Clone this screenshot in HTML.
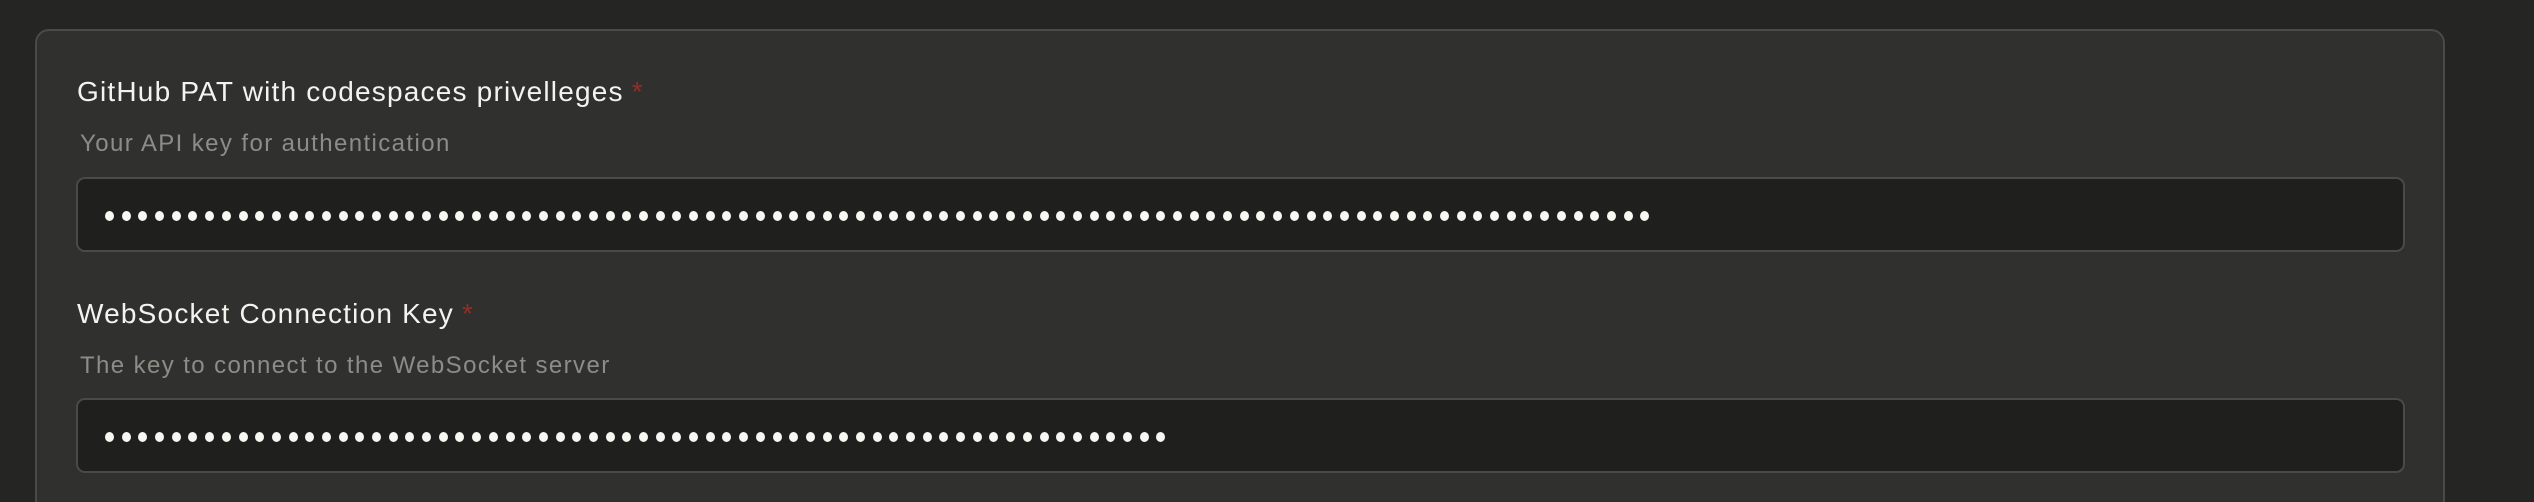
<!DOCTYPE html>
<html style="width:2534px;height:502px;overflow:hidden"><head><meta charset="utf-8"><style>
html,body{margin:0;padding:0;}
body{width:2534px;height:502px;background:#252524;position:relative;overflow:hidden;font-family:"Liberation Sans",sans-serif;}
.card{position:absolute;left:35px;top:29px;width:2410px;height:490px;background:#30302e;border:2px solid #4a4a48;border-radius:14px;box-sizing:border-box;}
.lbl{position:absolute;left:77px;color:#f4f3ee;font-size:28px;white-space:nowrap;letter-spacing:1.2px;}
.lbl .s{color:#8e2f2a;margin-left:8px;}
.desc{position:absolute;left:80px;color:#8d8c87;font-size:24px;white-space:nowrap;letter-spacing:1.4px;}
.inp{position:absolute;left:76px;width:2329px;height:75px;background:#1f1f1d;border:2px solid #4a4a48;border-radius:9px;box-sizing:border-box;}
.dots{position:absolute;left:105px;display:flex;gap:7.7px;}
.dots i{display:block;width:9px;height:10px;border-radius:50%;background:#f8f7f2;}
</style></head><body>
<div class="card"></div>
<div class="lbl" style="top:76px">GitHub PAT with codespaces privelleges<span class="s">*</span></div>
<div class="desc" style="top:130px">Your API key for authentication</div>
<div class="inp" style="top:177px"></div>
<div class="dots" id="d1" style="top:211px"></div>
<div class="lbl" style="top:298px">WebSocket Connection Key<span class="s">*</span></div>
<div class="desc" style="top:352px">The key to connect to the WebSocket server</div>
<div class="inp" style="top:398px"></div>
<div class="dots" id="d2" style="top:432px"></div>
<script>
function f(id,n){var e=document.getElementById(id),h='';for(var i=0;i<n;i++)h+='<i></i>';e.innerHTML=h;}
f('d1',93);f('d2',64);
</script>
</body></html>
